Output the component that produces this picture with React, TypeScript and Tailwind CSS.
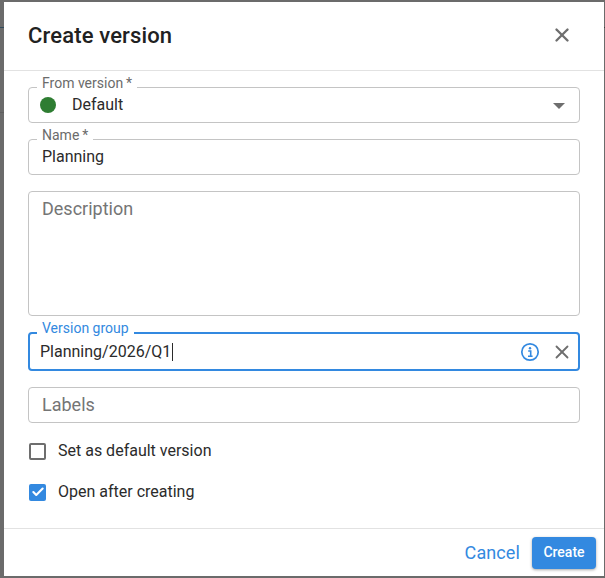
import { Check, X } from "lucide-react";

function Field({
  label,
  focused,
  className,
  children,
}: {
  label?: string;
  focused?: boolean;
  className?: string;
  children?: React.ReactNode;
}) {
  return (
    <div
      className={`relative flex rounded-[4px] ${
        focused ? "border-2 border-[#3389e0] px-[10px]" : "border border-[#c4c4c4] px-[13px]"
      } ${className ?? "h-[36px] items-center"}`}
    >
      {label && (
        <span
          className={`absolute bg-white px-[5px] text-[14px] leading-[20px] ${
            focused ? "left-[7px] top-[-16px] text-[#3389e0]" : "left-[8px] top-[-15px] text-[#6b6b6b]"
          }`}
        >
          {label}
        </span>
      )}
      {children}
    </div>
  );
}

function CheckRow({ label, checked }: { label: string; checked?: boolean }) {
  return (
    <div className="flex h-[24px] items-center gap-[12px] pl-[1px]">
      {checked ? (
        <span className="flex h-[17px] w-[17px] items-center justify-center rounded-[2px] bg-[#3389e0]">
          <Check size={14} strokeWidth={3.6} className="text-white" />
        </span>
      ) : (
        <span className="h-[17px] w-[17px] rounded-[2px] border-2 border-[#6e6e6e]" />
      )}
      <span className="text-[16px] text-[#2b2b2b]">{label}</span>
    </div>
  );
}

export default function App() {
  return (
    <div className="relative h-[578px] w-[605px] bg-[#6b6b6b] pb-[2px] pl-[4px] pr-[1px] pt-[2px] font-['Roboto',sans-serif]">
      {/* page behind the backdrop, only a sliver shows */}
      <div className="absolute left-0 top-[27px] h-px w-[4px] bg-[#2f4a5c]" />
      <div className="absolute left-0 top-[112px] h-px w-[4px] bg-[#5f5f5f]" />
      <div className="absolute right-0 top-[27px] h-px w-px bg-[#3f3f3f]" />

      <div className="flex h-full flex-col bg-white">
        <div className="flex h-[69px] shrink-0 items-center justify-between border-b border-[#e2e2e2] pb-[2px] pl-[24px] pr-[31px]">
          <h2 className="text-[22px] font-medium tracking-[0.15px] text-[#212121]">Create version</h2>
          <X size={22} strokeWidth={2.6} className="text-[#6e6e6e]" />
        </div>

        <div className="flex min-h-0 flex-1 flex-col px-[24px] pt-[16px]">
          <Field label={"From version\u2009*"}>
            <span className="ml-[-2px] h-[16px] w-[16px] rounded-full bg-[#2e7d32]" />
            <span className="ml-[16px] flex-1 text-[16px] text-[#2b2b2b]">Default</span>
            <span className="mr-[1px] mt-[1px] h-0 w-0 border-x-[6.5px] border-t-[6px] border-x-transparent border-t-[#6e6e6e]" />
          </Field>

          <Field label={"Name\u2009*"} className="mt-[16px] h-[36px] items-center">
            <span className="text-[16px] text-[#2b2b2b]">Planning</span>
          </Field>

          <Field className="mt-[16px] h-[125px] items-start pt-[3px]">
            <span className="text-[18px] text-[#757575]">Description</span>
          </Field>

          <Field label="Version group" focused className="mt-[16px] h-[39px] items-center">
            <span className="text-[16px] text-[#2b2b2b]">Planning/2026/Q1</span>
            <span className="ml-[1px] h-[18px] w-px bg-[#2b2b2b]" />
            <svg viewBox="0 0 20 20" className="ml-auto h-[20px] w-[20px]" fill="none">
              <circle cx="10" cy="10" r="8.2" stroke="#3389e0" strokeWidth="1.7" />
              <circle cx="10" cy="6.2" r="1.2" fill="#3389e0" />
              <path d="M8.2 9h2.5v5M8 14.2h4.6" stroke="#3389e0" strokeWidth="1.6" />
            </svg>
            <X size={22} strokeWidth={2} className="ml-[11px] mr-[-5px] text-[#6e6e6e]" />
          </Field>

          <Field className="mt-[16px] h-[36px] items-center">
            <span className="mt-[-2px] text-[18px] text-[#757575]">Labels</span>
          </Field>

          <div className="mt-[16px] flex flex-col gap-[17px]">
            <CheckRow label="Set as default version" />
            <CheckRow checked label="Open after creating" />
          </div>
        </div>

        <div className="flex h-[48px] shrink-0 items-center justify-end gap-[12px] border-t border-[#e2e2e2] pr-[8px]">
          <span className="text-[18px] tracking-[0.1px] text-[#3389e0]">Cancel</span>
          <button className="h-[32px] w-[64px] rounded-[4px] bg-[#3389e0] text-[14px] font-medium text-white shadow-[0_1px_3px_rgba(0,0,0,0.35)]">
            Create
          </button>
        </div>
      </div>
    </div>
  );
}
